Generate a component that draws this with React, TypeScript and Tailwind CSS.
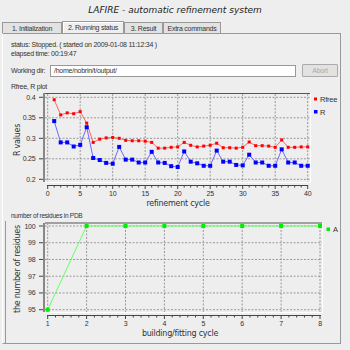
import React from "react";

const rfree = [
  0.394, 0.357, 0.362, 0.36, 0.365, 0.337, 0.29, 0.298, 0.301, 0.302, 0.3, 0.295, 0.294, 0.294, 0.293, 0.29, 0.276, 0.276,
  0.278, 0.279, 0.29, 0.283, 0.279, 0.281, 0.283, 0.288, 0.277, 0.277, 0.276, 0.278, 0.291, 0.282, 0.282, 0.281, 0.278,
  0.296, 0.278, 0.278, 0.279, 0.279,
];
const rwork = [
  0.342, 0.29, 0.29, 0.28, 0.284, 0.327, 0.252, 0.247, 0.24, 0.238, 0.279, 0.248, 0.248, 0.241, 0.241, 0.267, 0.241, 0.24,
  0.232, 0.23, 0.268, 0.243, 0.239, 0.233, 0.233, 0.27, 0.243, 0.243, 0.235, 0.234, 0.26, 0.241, 0.241, 0.233, 0.233,
  0.273, 0.241, 0.241, 0.233, 0.233,
];
const residues = [95, 100, 100, 100, 100, 100, 100, 100];

const SMALL = "'Liberation Sans', sans-serif";
const AXIS = "'DejaVu Sans', sans-serif";

function RPlot() {
  const px = (x: number) => 47.7 + 6.5 * x;
  const py = (v: number) => 97.3 + (0.4 - v) * 410;
  const yTicks = [0.4, 0.35, 0.3, 0.25, 0.2];
  const xTicks = [0, 5, 10, 15, 20, 25, 30, 35, 40];
  const line = (d: number[]) => d.map((v, i) => `${px(i + 1)},${py(v)}`).join(" ");
  return (
    <svg width={337} height={117} viewBox="3 91 337 117" className="block">
      <line x1={45} y1={93.5} x2={310} y2={93.5} stroke="#555" />
      <line x1={310.5} y1={93} x2={310.5} y2={182} stroke="#fff" />
      <line x1={45} y1={182.5} x2={311} y2={182.5} stroke="#fff" />
      {xTicks.map((t) => (
        <line key={"gx" + t} x1={px(t)} y1={94} x2={px(t)} y2={182} stroke="#999" strokeDasharray="2 1.5" />
      ))}
      {yTicks.map((t) => (
        <line key={"gy" + t} x1={45} y1={py(t)} x2={310} y2={py(t)} stroke="#999" strokeDasharray="2 1.5" />
      ))}
      <rect x={43} y={93} width={2} height={89} fill="#888" />
      {yTicks.map((t) => (
        <g key={"ty" + t}>
          <line x1={39} y1={py(t)} x2={43} y2={py(t)} stroke="#444" />
          <text x={35.5} y={py(t) + 2.5} fontSize={7} letterSpacing={-0.2} textAnchor="end" fill="#333" fontFamily={SMALL}>
            {String(t)}
          </text>
        </g>
      ))}
      <line x1={47} y1={185.5} x2={308} y2={185.5} stroke="#444" />
      {Array.from({ length: 41 }, (_, i) => (
        <line key={"mx" + i} x1={px(i)} y1={185} x2={px(i)} y2={i % 5 === 0 ? 189 : 187.5} stroke="#444" />
      ))}
      {xTicks.map((t) => (
        <text key={"lx" + t} x={px(t)} y={196} fontSize={7} textAnchor="middle" fill="#333" fontFamily={SMALL}>
          {t}
        </text>
      ))}
      <text x={178} y={206} fontSize={8} textAnchor="middle" fill="#333" fontFamily={AXIS}>
        refinement cycle
      </text>
      <text x={0} y={0} fontSize={8} textAnchor="middle" fill="#333" fontFamily={AXIS} transform="translate(20,140) rotate(-90)">
        R values
      </text>
      <polyline points={line(rfree)} fill="none" stroke="#ff6464" strokeWidth={1} />
      <polyline points={line(rwork)} fill="none" stroke="#6a6aff" strokeWidth={1} />
      {rfree.map((v, i) => (
        <rect key={"rf" + i} x={px(i + 1) - 1.5} y={py(v) - 1.5} width={3} height={3} fill="#f00" />
      ))}
      {rwork.map((v, i) => (
        <rect key={"rw" + i} x={px(i + 1) - 2} y={py(v) - 2} width={4} height={4} fill="#00f" />
      ))}
      <rect x={314} y={97.5} width={3} height={3} fill="#f00" />
      <text x={320} y={101.5} fontSize={7.5} fill="#333" fontFamily={SMALL}>
        Rfree
      </text>
      <rect x={314} y={110} width={3.5} height={3.5} fill="#00f" />
      <text x={320} y={114.5} fontSize={7.5} fill="#333" fontFamily={SMALL}>
        R
      </text>
    </svg>
  );
}

function ResiduePlot() {
  const px = (x: number) => 47.7 + 38.9 * (x - 1);
  const py = (v: number) => 226 + (100 - v) * 16.74;
  const yTicks = [100, 99, 98, 97, 96, 95];
  const xTicks = [1, 2, 3, 4, 5, 6, 7, 8];
  return (
    <svg width={334} height={121} viewBox="6 221 334 121" className="block">
      <defs>
        <clipPath id="ytitle">
          <rect x={0} y={224} width={40} height={93} />
        </clipPath>
      </defs>
      <line x1={45} y1={223} x2={322} y2={223} stroke="#555" />
      <line x1={322.5} y1={223} x2={322.5} y2={312} stroke="#fff" />
      <line x1={45} y1={312.5} x2={323} y2={312.5} stroke="#fff" />
      {xTicks.map((t) => (
        <line key={"gx" + t} x1={px(t)} y1={223} x2={px(t)} y2={312} stroke="#999" strokeDasharray="2 1.5" />
      ))}
      {yTicks.map((t) => (
        <line key={"gy" + t} x1={45} y1={py(t)} x2={322} y2={py(t)} stroke="#999" strokeDasharray="2 1.5" />
      ))}
      <rect x={43} y={223} width={2} height={89} fill="#888" />
      {yTicks.map((t) => (
        <g key={"ty" + t}>
          <line x1={39} y1={py(t)} x2={43} y2={py(t)} stroke="#444" />
          <text x={35.5} y={py(t) + 2.5} fontSize={7} letterSpacing={-0.2} textAnchor="end" fill="#333" fontFamily={SMALL}>
            {t}
          </text>
        </g>
      ))}
      <line x1={47} y1={315.5} x2={321} y2={315.5} stroke="#444" />
      {Array.from({ length: 36 }, (_, i) => (
        <line
          key={"mx" + i}
          x1={47.7 + (38.9 / 5) * i}
          y1={315}
          x2={47.7 + (38.9 / 5) * i}
          y2={i % 5 === 0 ? 319 : 317.5}
          stroke="#444"
        />
      ))}
      {xTicks.map((t) => (
        <text key={"lx" + t} x={px(t)} y={326} fontSize={7} textAnchor="middle" fill="#333" fontFamily={SMALL}>
          {t}
        </text>
      ))}
      <text x={180} y={336} fontSize={8} textAnchor="middle" fill="#333" fontFamily={AXIS}>
        building/fitting cycle
      </text>
      <g clipPath="url(#ytitle)">
        <text x={0} y={0} fontSize={8} textAnchor="middle" fill="#333" fontFamily={AXIS} transform="translate(20,269) rotate(-90)">
          the number of residues
        </text>
      </g>
      <polyline
        points={residues.map((v, i) => `${px(i + 1)},${py(v)}`).join(" ")}
        fill="none"
        stroke="#66ff66"
        strokeWidth={1}
      />
      {residues.map((v, i) => (
        <rect key={"p" + i} x={px(i + 1) - 2} y={py(v) - 2} width={4} height={4} fill="#0e0" />
      ))}
      <rect x={326.5} y={227.5} width={3.5} height={3.5} fill="#0e0" />
      <text x={333} y={232} fontSize={7.5} fill="#333" fontFamily={SMALL}>
        A
      </text>
    </svg>
  );
}

export default function App() {
  return (
    <div className="w-[350px] h-[350px] overflow-hidden bg-[#eeeeee] text-[#333] font-['Liberation_Sans',sans-serif] tracking-[-0.25px]">
      <div className="h-[22px] flex items-center justify-center italic text-[9px] tracking-normal font-['DejaVu_Sans',sans-serif] text-[#222]">
        LAFIRE - automatic refinement system
      </div>
      <div className="flex h-[11px] pl-[2px] text-[7px] leading-none whitespace-nowrap">
        <div className="w-[60px] flex items-center justify-center border border-b-0 border-[#999] bg-[#e2e2e2]">1. Initialization</div>
        <div className="w-[62px] flex items-center justify-center border border-b-0 border-[#999] bg-[#eeeeee] -mt-[1px] h-[12px] shadow-[inset_1px_1px_0_#fff]">
          2. Running status
        </div>
        <div className="w-[39px] flex items-center justify-center border border-b-0 border-[#999] bg-[#e2e2e2]">3. Result</div>
        <div className="w-[58px] flex items-center justify-center border border-b-0 border-[#999] bg-[#e2e2e2]">Extra commands</div>
      </div>
      <div className="ml-[2px] w-[339px] h-[311px] border border-[#999] border-l-white flex flex-col text-[7px] leading-none whitespace-nowrap">
        <div className="pl-[8px] pt-[5px]">
          <div className="h-[10px] flex items-center">status: Stopped. ( started on 2009-01-08 11:12:34 )</div>
          <div className="h-[9px] flex items-center">elapsed time: 00:19:47</div>
        </div>
        <div className="flex items-center mt-[6px] pl-[8px] h-[13px]">
          <span className="w-[39px]">Working dir:</span>
          <div className="w-[246px] h-[12px] bg-white border border-[#999] flex items-center pl-[3px]">/home/nobrin/t/output/</div>
          <div className="ml-[6px] w-[36px] h-[13px] border border-[#aaa] bg-[#e2e2e2] text-[#aaa] flex items-center justify-center rounded-[1px]">
            Abort
          </div>
        </div>
        <div className="h-[10px] mt-[4px] pl-[8px] flex items-center">Rfree, R plot</div>
        <RPlot />
        <div className="h-[10px] mt-[3px] pl-[8px] flex items-center text-[6.5px]">number of residues in PDB</div>
        <div className="ml-[2px] border-l border-[#999] flex-1">
          <ResiduePlot />
        </div>
      </div>
    </div>
  );
}
